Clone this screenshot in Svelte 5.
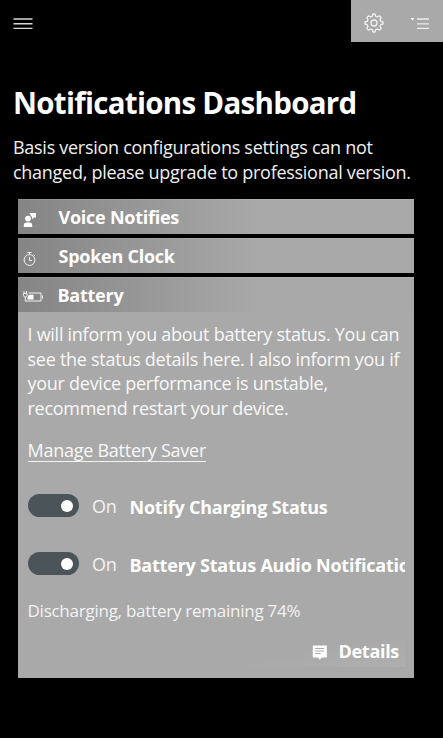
<script lang="ts">
	let charging = $state(true);
	let audio = $state(true);
</script>

<div class="page">
	<header>
		<button class="menu" aria-label="Menu">
			<svg width="20" height="14" viewBox="0 0 20 14" stroke="#d6dbda" stroke-width="1.4">
				<path d="M.5 2H19.5M.5 6.8H19.5M.5 11.4H19.5" />
			</svg>
		</button>
		<div class="actions">
			<button aria-label="Settings">
				<svg width="20" height="20" viewBox="0 0 20 20" fill="none" stroke="#f1f1f1" stroke-width="1.3" stroke-linejoin="round">
					<path d="M8.4 3.2 9 1h2l.6 2.2 1.8.8 2-1.2 1.8 1.8-1.2 2 .8 1.8 2.2.6v2l-2.2.6-.8 1.8 1.2 2-1.8 1.8-2-1.2-1.8.8L11 19H9l-.6-2.2-1.8-.8-2 1.2-1.8-1.8 1.2-2-.8-1.8L1 11V9l2.2-.6L4 6.600l-1.2-2 1.8-1.8 2 1.2z" />
					<circle cx="10" cy="10" r="3" />
				</svg>
			</button>
			<button aria-label="List">
				<svg class="list" width="20" height="14" viewBox="0 0 20 14">
					<path d="M.5 1h4l-2 2.5z" fill="#fff" />
					<path d="M7 2H19M7 6.800H19M7 11.400H19" stroke="#eee" stroke-width="1.3" />
				</svg>
			</button>
		</div>
	</header>

	<main>
		<h1>Notifications Dashboard</h1>
		<p class="intro">
			<span>Basis version configurations settings can not</span><br />
			<span>changed, please upgrade to professional version.</span>
		</p>

		<section class="card">
			<h2>
				<svg width="21" height="16" viewBox="0 0 21 16" fill="#fff">
					<circle cx="5" cy="6.6" r="2.9" />
					<path d="M.8 15v-1.800Q.8 10.400 3.600 10.400h3Q9.200 10.400 9.200 13.200V15zM6.600 1H13v4.600h-2L9.200 7.400V5.600L7.600 3.200z" />
				</svg>
				<span>Voice Notifies</span>
			</h2>
		</section>

		<section class="card">
			<h2>
				<svg width="21" height="16" viewBox="0 0 21 16" fill="none" stroke="#f1f1f1">
					<circle cx="6.500" cy="9" r="5.400" />
					<path d="M4.500 1.500h4M6.500 1.500v2M6.500 6v3.500H9M10.500 3.500 12 5" />
				</svg>
				<span>Spoken Clock</span>
			</h2>
		</section>

		<section class="card open">
			<h2 class="battery">
				<svg width="21" height="14" viewBox="0 0 21 14" fill="none" stroke="#f1f1f1">
					<path d="M1 1v2M3.500 1v2M.5 3.500H4v2l-1 1.500H1.500l-1-1.500zM2.300 7v4.500" />
					<path d="M5.500 3h12.500v8H2.500M19.500 5.500v3" />
					<path d="M6 4.800h4.500v4.700H4.500V7z" fill="#fff" stroke="none" />
				</svg>
				<span>Battery</span>
			</h2>
			<div class="body">
				<p class="info">
					<span>I will inform you about battery status. You can</span><br />
					<span>see the status details here. I also inform you if</span><br />
					<span>your device performance is unstable,</span><br />
					<span>recommend restart your device.</span>
				</p>
				<a href="#saver">Manage Battery Saver</a>

				<div class="setting">
					<button class="switch" class:off={!charging} aria-label="Notify Charging Status" onclick={() => (charging = !charging)}></button>
					<span class="state">{charging ? 'On' : 'Off'}</span>
					<strong>Notify Charging Status</strong>
				</div>
				<div class="setting">
					<button class="switch" class:off={!audio} aria-label="Battery Status Audio Notification" onclick={() => (audio = !audio)}></button>
					<span class="state">{audio ? 'On' : 'Off'}</span>
					<strong>Battery Status Audio Notification</strong>
				</div>

				<p class="remaining">Discharging, battery remaining 74%</p>
				<button class="details">
					<svg width="16" height="15" viewBox="0 0 16 15">
						<path d="M.8.5h14v12h-4.800l-2.200 2-2.200-2H.8z" fill="#fff" />
						<path d="M3.200 3.500h9M3.200 6h9M3.200 8.500h5.500" stroke="#aaa" />
					</svg>
					<span>Details</span>
				</button>
			</div>
		</section>
	</main>
</div>

<style>
	:global(body) {
		background: #000;
	}

	.page {
		box-sizing: border-box;
		height: 738px;
		overflow: hidden;
		background: #000;
		color: #fff;
		font-family: 'Open Sans', 'Noto Sans', sans-serif;
		font-size: 18px;
	}

	h1,
	h2,
	p {
		margin: 0;
	}

	button {
		padding: 0;
		border: 0;
		background: none;
		color: inherit;
		font: inherit;
	}

	svg {
		display: block;
		flex: none;
	}

	header {
		display: flex;
		justify-content: space-between;
		height: 42px;
	}

	.menu {
		padding: 6px 0 0 13px;
	}

	.actions {
		display: flex;
		width: 92px;
		background: #a9a9a9;
	}

	.actions button {
		display: flex;
		align-items: center;
		justify-content: center;
		width: 46px;
		padding-top: 4px;
	}

	.list {
		margin-top: 2px;
	}

	main {
		padding: 40px 28px 0 13px;
	}

	h1 {
		font-size: 29.5px;
		line-height: 42px;
		letter-spacing: -0.71px;
		white-space: nowrap;
	}

	.intro {
		margin: 11px 0 15px;
		line-height: 24.7px;
		letter-spacing: -0.28px;
		white-space: nowrap;
		color: #f0f0f0;
	}

	.card {
		box-sizing: border-box;
		height: 35px;
		margin: 0 1px 4px 4.500px;
		background: #a9a9a9;
	}

	.card.open {
		height: 401px;
	}

	h2 {
		box-sizing: border-box;
		display: flex;
		height: 35px;
		padding-left: 5px;
		background: linear-gradient(90deg, #858585, #a8a8a8 60%);
		box-shadow: inset 0 1px rgba(255, 255, 255, 0.1);
		font-size: 18px;
		line-height: 37px;
		letter-spacing: -0.25px;
	}

	h2 svg {
		margin: 13px 15px 0 0;
	}

	h2.battery svg {
		margin-right: 14px;
	}

	.body {
		padding: 9.500px 9.500px 0 10px;
	}

	.info {
		line-height: 24.7px;
		letter-spacing: -0.27px;
		white-space: nowrap;
		color: #f8f8f8;
	}

	a {
		display: inline-block;
		margin-top: 19px;
		border-bottom: 1px solid #f3f3f3;
		color: #f8f8f8;
		line-height: 21px;
		letter-spacing: -0.26px;
		text-decoration: none;
	}

	.setting {
		display: flex;
		align-items: center;
		height: 58px;
		overflow: hidden;
		white-space: nowrap;
	}

	a + .setting {
		margin-top: 15px;
	}

	.switch {
		display: flex;
		flex: none;
		align-items: center;
		justify-content: flex-end;
		width: 51px;
		height: 23px;
		padding-right: 5.500px;
		border-radius: 12px;
		background: #4a5459;
	}

	.switch::after {
		content: '';
		width: 12px;
		height: 12px;
		border-radius: 50%;
		background: #fff;
	}

	.switch.off {
		justify-content: flex-start;
		padding: 0 0 0 5.500px;
	}

	.state {
		width: 37.5px;
		margin-left: 13.5px;
		flex: none;
		color: #f3f3f3;
		letter-spacing: -0.3px;
	}

	strong {
		padding-top: 3px;
		letter-spacing: -0.22px;
	}

	.remaining {
		margin-top: 6px;
		color: #f3f3f3;
		font-size: 17px;
		line-height: 24px;
		letter-spacing: -0.25px;
	}

	.details {
		display: flex;
		align-items: center;
		justify-content: flex-end;
		width: 195px;
		height: 34px;
		margin: 10px 0 0 auto;
		padding: 2px 5.5px 0 0;
		background: linear-gradient(170deg, transparent 50%, rgba(255, 255, 255, 0.07));
		font-weight: 700;
		letter-spacing: -0.3px;
	}

	.details svg {
		margin: 4px 11px 0 0;
	}
</style>
